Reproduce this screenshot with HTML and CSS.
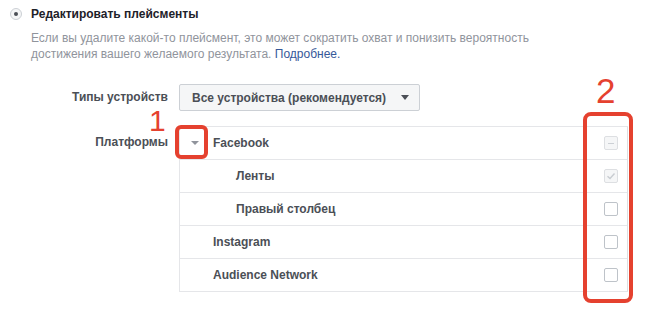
FILE: index.html
```html
<!DOCTYPE html>
<html lang="ru">
<head>
<meta charset="utf-8">
<title>Плейсменты</title>
<link rel="stylesheet" href="styles.css">
</head>
<body>
<div class="page">
  <div class="radio-row">
    <span class="radio"><span class="radio-dot"></span></span>
    <span class="title">Редактировать плейсменты</span>
  </div>
  <p class="desc">Если вы удалите какой-то плейсмент, это может сократить охват и понизить вероятность достижения вашего желаемого результата. <a class="link" href="#">Подробнее.</a></p>

  <div class="form">
    <div class="label label-devices">Типы устройств</div>
    <div class="control">
      <button class="select" type="button">Все устройства (рекомендуется)<span class="select-caret"></span></button>
    </div>

    <div class="label label-platforms">Платформы</div>
    <div class="control">
      <div class="table">
        <div class="row">
          <span class="expander"><span class="expander-caret"></span></span>
          <span class="row-text">Facebook</span>
          <span class="check check-disabled"><span class="minus"></span></span>
        </div>
        <div class="row row-sub">
          <span class="row-text">Ленты</span>
          <span class="check check-disabled">
            <svg class="tick" width="10" height="8" viewBox="0 0 10 8"><path d="M1.5 4.2 L4 6.5 L8.5 1.5" fill="none" stroke="#c8ccd1" stroke-width="1.4"/></svg>
          </span>
        </div>
        <div class="row row-sub">
          <span class="row-text">Правый столбец</span>
          <span class="check"></span>
        </div>
        <div class="row">
          <span class="row-text">Instagram</span>
          <span class="check"></span>
        </div>
        <div class="row">
          <span class="row-text">Audience Network</span>
          <span class="check"></span>
        </div>
      </div>
    </div>
  </div>

  <span class="mark mark-num mark-num-1">1</span>
  <span class="mark mark-box mark-box-1"></span>
  <span class="mark mark-num mark-num-2">2</span>
  <span class="mark mark-box mark-box-2"></span>
</div>
</body>
</html>
```

FILE: styles.css
```css
* { box-sizing: border-box; }

html, body {
  margin: 0;
  padding: 0;
  background: #ffffff;
}

body {
  font-family: "Liberation Sans", Arial, Helvetica, sans-serif;
  font-size: 12px;
  color: #4b4f56;
}

.page {
  position: relative;
  width: 646px;
  height: 309px;
  padding: 6px 0 0 10px;
  overflow: hidden;
}

.radio-row {
  display: flex;
  align-items: center;
  gap: 9px;
  height: 16px;
}

.radio {
  width: 12px;
  height: 12px;
  border-radius: 50%;
  border: 1px solid #ccd0d5;
  background: #f5f6f7;
  display: flex;
  align-items: center;
  justify-content: center;
}

.radio-dot {
  width: 4px;
  height: 4px;
  border-radius: 50%;
  background: #4b4f56;
}

.title {
  font-weight: bold;
  color: #1d2129;
  font-size: 12px;
}

.desc {
  margin: 8px 0 0 21px;
  width: 540px;
  line-height: 16px;
  color: #90949c;
}

.link {
  color: #365899;
  text-decoration: none;
}

.form {
  display: grid;
  grid-template-columns: 158px 449px;
  column-gap: 11px;
  row-gap: 15px;
  margin-top: 22px;
}

.label {
  font-weight: bold;
  text-align: right;
  color: #4b4f56;
}

.label-devices {
  line-height: 27px;
}

.label-platforms {
  line-height: 33px;
}

.select {
  display: inline-flex;
  align-items: center;
  height: 27px;
  width: 241px;
  padding: 0 10px 0 12px;
  border: 1px solid #ccd0d5;
  border-radius: 2px;
  background: #f5f6f7;
  font-family: inherit;
  font-size: 12px;
  font-weight: bold;
  color: #4b4f56;
  justify-content: space-between;
}

.select-caret {
  width: 0;
  height: 0;
  border-left: 4px solid transparent;
  border-right: 4px solid transparent;
  border-top: 5px solid #4b4f56;
}

.table {
  border: 1px solid #e5e6e9;
  border-right-color: #dddfe2;
}

.row {
  display: flex;
  align-items: center;
  height: 33px;
  padding: 0 9px 0 33px;
  border-top: 1px solid #e5e6e9;
  position: relative;
}

.row:first-child {
  border-top: none;
  height: 32px;
}

.row-sub {
  padding-left: 56px;
}

.expander {
  position: absolute;
  left: 0;
  top: 0;
  width: 28px;
  height: 100%;
  display: flex;
  align-items: center;
  justify-content: center;
}

.expander-caret {
  width: 0;
  height: 0;
  margin-left: 2px;
  border-left: 4px solid transparent;
  border-right: 4px solid transparent;
  border-top: 4px solid #90949c;
}

.row-text {
  font-weight: bold;
  color: #4b4f56;
  flex: 1;
}

.check {
  width: 14px;
  height: 14px;
  border: 1px solid #bec3c9;
  border-radius: 2px;
  background: #ffffff;
  display: flex;
  align-items: center;
  justify-content: center;
}

.check-disabled {
  border-color: #dddfe2;
  background: #f5f6f7;
}

.minus {
  width: 6px;
  height: 1px;
  background: #ccd0d5;
}

.mark {
  position: absolute;
}

.mark-num {
  color: #e5412f;
  font-family: "Liberation Sans", Arial, sans-serif;
  line-height: 1;
}

.mark-num-1 {
  left: 149px;
  top: 106px;
  font-size: 30px;
}

.mark-num-2 {
  left: 596px;
  top: 73px;
  font-size: 35px;
}

.mark-box {
  border: 4px solid #e5412f;
  border-radius: 7px;
}

.mark-box-1 {
  left: 175px;
  top: 125px;
  width: 33px;
  height: 34px;
  border-radius: 6px;
}

.mark-box-2 {
  left: 583px;
  top: 112px;
  width: 50px;
  height: 191px;
  border-radius: 8px;
}
```
